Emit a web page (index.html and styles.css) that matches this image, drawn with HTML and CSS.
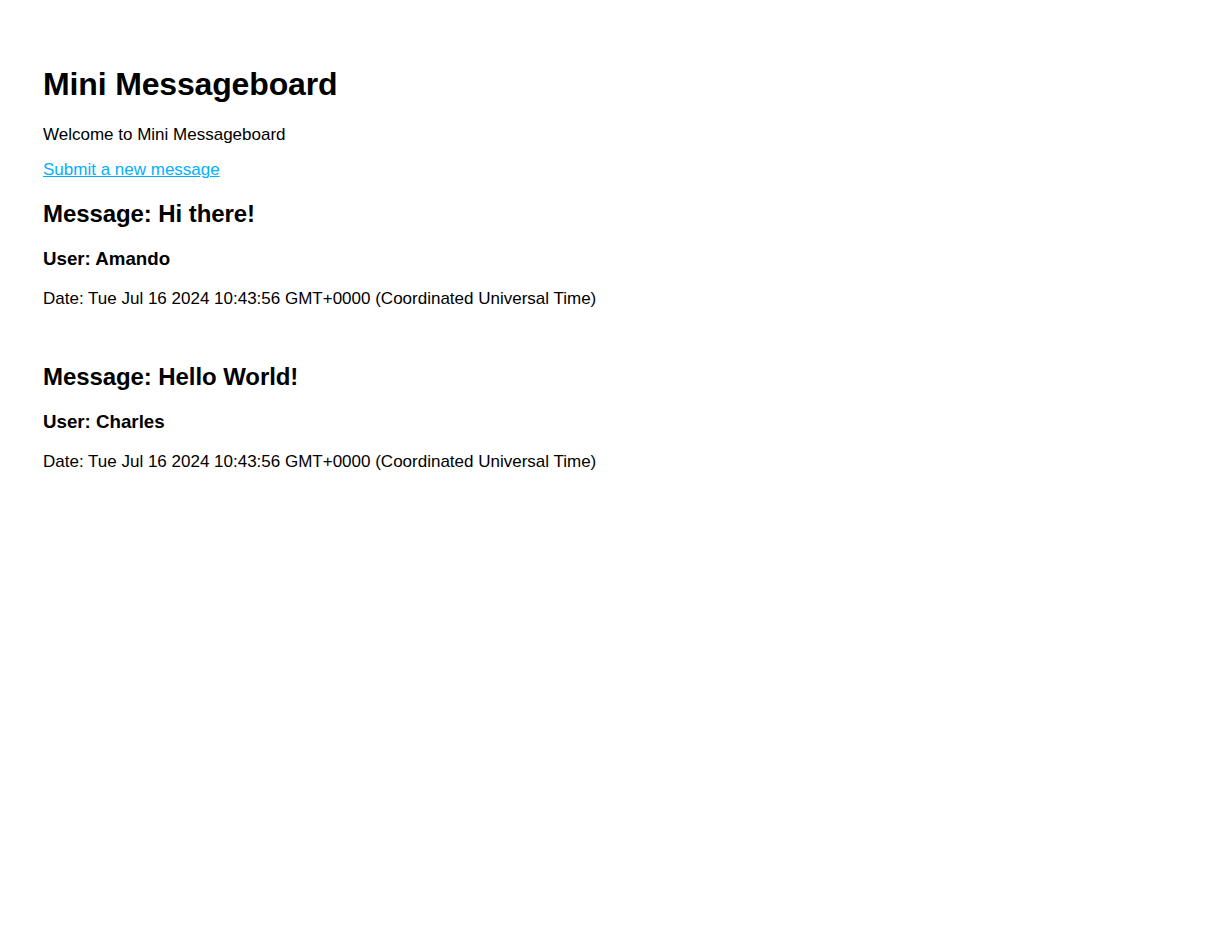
FILE: index.html
```html
<!DOCTYPE html>
<html lang="en">
<head>
<meta charset="utf-8">
<title>Mini Messageboard</title>
<link rel="stylesheet" href="styles.css">
</head>
<body>
<main class="board">
  <h1 class="board-title">Mini Messageboard</h1>
  <p class="intro">Welcome to Mini Messageboard</p>
  <p class="new-link-row"><a class="new-link" href="#">Submit a new message</a></p>
  <section class="message-list">
    <div class="message">
      <h2 class="message-text">Message: Hi there!</h2>
      <h3 class="message-user">User: Amando</h3>
      <p class="message-date">Date: Tue Jul 16 2024 10:43:56 GMT+0000 (Coordinated Universal Time)</p>
    </div>
    <div class="message">
      <h2 class="message-text">Message: Hello World!</h2>
      <h3 class="message-user">User: Charles</h3>
      <p class="message-date">Date: Tue Jul 16 2024 10:43:56 GMT+0000 (Coordinated Universal Time)</p>
    </div>
  </section>
</main>
</body>
</html>
```
FILE: styles.css
```css
html, body {
  background: #ffffff;
}

body {
  margin: 0;
  padding: 45px 43px;
  font-family: "Liberation Sans", Arial, sans-serif;
  line-height: 1.149;
  color: #000000;
}

.board {
  display: block;
}

.board-title {
  font-size: 32px;
  font-weight: bold;
  letter-spacing: -0.15px;
  margin: 21.44px 0;
}

.intro {
  font-size: 17px;
  margin: 0 0 16px;
}

.new-link-row {
  font-size: 17px;
  margin: 0 0 19.8px;
}

.new-link {
  color: #00b0ff;
  text-decoration: underline;
}

.message-list {
  display: flex;
  flex-direction: column;
  gap: 54.5px;
}

.message-text {
  font-size: 24px;
  font-weight: bold;
  letter-spacing: -0.08px;
  margin: 0 0 20.5px;
}

.message-user {
  font-size: 18.72px;
  font-weight: bold;
  margin: 0 0 19.5px;
}

.message-date {
  font-size: 17px;
  margin: 0;
}
```
